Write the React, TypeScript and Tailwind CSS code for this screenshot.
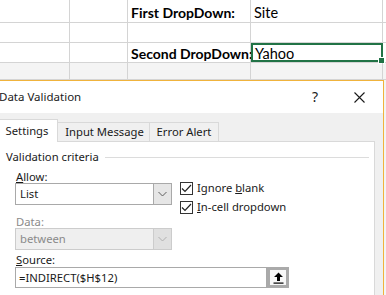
import React from 'react';

const sheetFont = { fontFamily: 'Lato, "Liberation Sans", sans-serif' };
const uiFont = { fontFamily: '"Noto Sans", "Open Sans", sans-serif' };

const Chevron = ({ color = '#5f5f5f' }: { color?: string }) => (
  <svg width="9" height="6" viewBox="0 0 9 6">
    <path d="M0.5 1 L4.5 5 L8.5 1" fill="none" stroke={color} strokeWidth="1" />
  </svg>
);

const Check = () => (
  <span className="flex h-[13px] w-[13px] items-center justify-center border border-[#333] bg-white">
    <svg width="11" height="9" viewBox="0 0 11 9">
      <path d="M1 4.5 L4 7.5 L10 1" fill="none" stroke="#222" strokeWidth="1.2" />
    </svg>
  </span>
);

const SheetRow = ({ label, value, selected, h = 'h-[20px]', shade }: { label?: string; value?: string; selected?: boolean; h?: string; shade?: boolean }) => (
  <div className={`flex ${h} border-b border-[#d4d4d4] ${shade ? 'bg-[#f4f4f4]' : 'bg-white'}`}>
    <div className="w-[70px] shrink-0 border-r border-[#d4d4d4]" />
    <div className="w-[58px] shrink-0 border-r border-[#d4d4d4]" />
    <div className="flex w-[123px] shrink-0 items-center whitespace-nowrap border-r border-[#d4d4d4] pl-[3px] pt-[3px] text-[14px] font-bold leading-[18px] text-black">
      {label}
    </div>
    <div className={`relative flex w-[132px] shrink-0 items-center whitespace-nowrap pt-[3px] text-[14.5px] leading-[18px] text-black ${selected ? 'border-2 border-[#217346] pl-[2px]' : 'border-r border-[#d4d4d4] pl-[3px]'}`}>
      {value}
      {selected && <span className="absolute -right-[3px] -bottom-[3px] h-[5px] w-[5px] bg-[#217346] ring-1 ring-white" />}
    </div>
    <div className="flex-1" />
  </div>
);

export default function App() {
  return (
    <div className="h-[295px] w-[386px] overflow-hidden bg-white" style={uiFont}>
      {/* spreadsheet */}
      <div style={sheetFont}>
        <SheetRow label="First DropDown:" value="Site" h="h-[23px]" />
        <SheetRow />
        <SheetRow label="Second DropDown:" value="Yahoo" selected />
        <SheetRow h="h-[17px]" shade />
      </div>

      {/* dialog */}
      <div className="flex">
        <div className="w-[384px] shrink-0 border-t border-r border-[#f0b33c] bg-[#f0f0f0]">
          <div className="flex h-[32px] items-center bg-white text-[11.5px] text-[#1a1a1a]">
            <span className="-ml-[1px]">Data Validation</span>
            <span className="ml-auto mr-[36px] text-[14px] leading-none">?</span>
            <svg className="mr-[18px]" width="11" height="11" viewBox="0 0 11 11">
              <path d="M0.5 0.5 L10.5 10.5 M10.5 0.5 L0.5 10.5" stroke="#1a1a1a" strokeWidth="1.1" />
            </svg>
          </div>

          <div className="pt-[6px] pr-[8px]">
            <div className="flex items-end text-[11.25px] text-[#1a1a1a]">
              <div className="relative z-10 -mb-px flex h-[23px] w-[58px] items-center justify-center border-r border-t border-[#d9d9d9] bg-white pr-[3px]">
                Settings
              </div>
              <div className="flex h-[19px] w-[92px] items-center justify-center border-r border-t border-[#d9d9d9] pl-[2px]">
                Input Message
              </div>
              <div className="flex h-[19px] w-[69px] items-center justify-center border-r border-t border-[#d9d9d9]">
                Error Alert
              </div>
            </div>

            <div className="h-[160px] border border-l-0 border-[#d9d9d9] bg-white text-[11.25px] text-[#1a1a1a]">
              <div className="mt-[7px] flex h-[16px] items-center pl-[6px]">
                <span className="leading-[16px]">Validation criteria</span>
                <span className="ml-[6px] mr-[5px] h-px flex-1 bg-[#dcdcdc]" />
              </div>

              <div className="flex pl-[15px]">
                <div className="w-[157px] shrink-0">
                  <div className="mt-[5px] h-[13px] pl-px leading-[13px]">
                    <span className="underline">A</span>llow:
                  </div>
                  <div className="flex h-[22px] border border-[#a9a9a9] bg-white">
                    <span className="flex-1 pl-[4px] leading-[20px]">List</span>
                    <span className="flex w-[18px] items-center justify-center border-l border-[#a9a9a9] bg-[#e6e6e6]">
                      <Chevron />
                    </span>
                  </div>
                  <div className="mt-[10px] h-[13px] pl-px leading-[13px] text-[#8a8a8a]">Data:</div>
                  <div className="flex h-[22px] border border-[#cccccc] bg-[#efefef] text-[#8a8a8a]">
                    <span className="flex-1 pl-[4px] leading-[20px]">between</span>
                    <span className="flex w-[18px] items-center justify-center border-l border-[#cccccc] bg-[#e0e0e0]">
                      <Chevron color="#b0b0b0" />
                    </span>
                  </div>
                </div>
                <div className="ml-[8px] flex flex-col gap-[6px] pt-[17px]">
                  <div className="flex h-[13px] items-center gap-[4px]">
                    <Check />
                    <span>Ignore <span className="underline">b</span>lank</span>
                  </div>
                  <div className="flex h-[13px] items-center gap-[4px]">
                    <Check />
                    <span><span className="underline">I</span>n-cell dropdown</span>
                  </div>
                </div>
              </div>

              <div className="mt-[3px] h-[13px] pl-[16px] leading-[13px]">
                <span className="underline">S</span>ource:
              </div>
              <div className="ml-[15px] mt-px flex h-[21px] w-[274px] items-start">
                <div className="h-[21px] flex-1 border border-[#a9a9a9] pl-[3px] leading-[19px]">=INDIRECT($H$12)</div>
                <div className="flex h-[21px] w-[22px] items-center justify-center border-[3px] border-[#aaaaaa] bg-[#f7f7f7]">
                  <svg width="11" height="12" viewBox="0 0 11 12">
                    <path d="M5.5 0.5 L10 5 L7 5 L7 9 L4 9 L4 5 L1 5 Z" fill="#000" />
                    <rect x="0.5" y="10.5" width="10" height="1.2" fill="#000" />
                  </svg>
                </div>
              </div>
            </div>
          </div>
        </div>
        <div className="flex-1 bg-[#f4f4f4]" />
      </div>
    </div>
  );
}
